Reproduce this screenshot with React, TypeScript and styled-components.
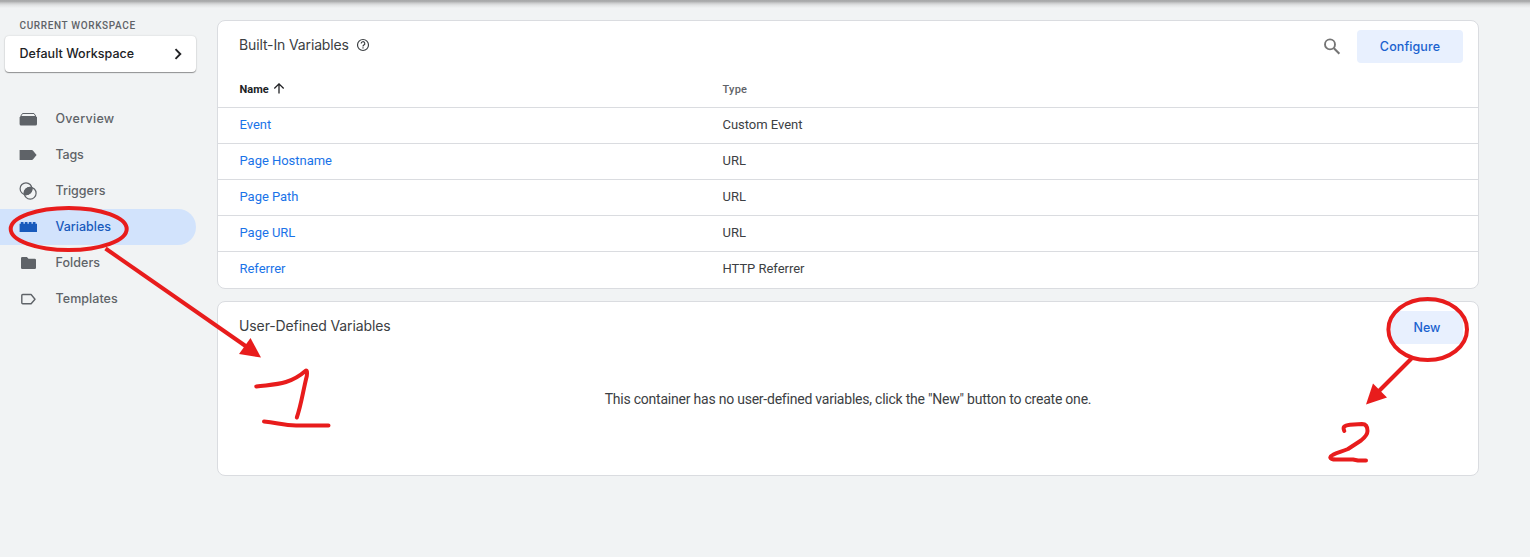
import React from 'react';
import styled, { createGlobalStyle } from 'styled-components';

const GlobalStyle = createGlobalStyle`
  * { box-sizing: border-box; }
  body { margin: 0; background: #f1f3f4; font-family: Roboto, "Liberation Sans", sans-serif; color: #3c4043; overflow: hidden; }
`;

const Page = styled.div`
  position: relative;
  display: flex;
  height: 557px;
  width: 100%;
  background: #f1f3f4;
`;

const TopShadow = styled.div`
  position: absolute;
  inset: 0 0 auto 0;
  height: 8px;
  background: linear-gradient(#a6a7a8 0, #adaeaf 1.5px, #c9cacb 3px, #e0e2e3 5px, #f1f3f4 8px);
`;

const Sidebar = styled.aside`
  width: 217px;
  flex: none;
  padding-top: 19px;
`;

const WorkspaceLabel = styled.div`
  padding-left: 19.5px;
  font-size: 10px;
  line-height: 14px;
  font-weight: 500;
  letter-spacing: 0.64px;
  color: #5f6368;
`;

const WorkspaceButton = styled.button`
  display: flex;
  align-items: center;
  justify-content: space-between;
  width: 191px;
  height: 36px;
  margin: 3px 0 0 5px;
  padding: 0 12px 0 14.5px;
  border: 0;
  border-radius: 4px;
  background: #fff;
  box-shadow: 0 1px 1px rgba(0, 0, 0, 0.38), 0 0 2px rgba(0, 0, 0, 0.16);
`;

const Label = styled.span<{ $size?: number; $weight?: number; $track?: number; $color?: string }>`
  font-family: Inter, Roboto, sans-serif;
  font-size: ${p => p.$size ?? 12.5}px;
  font-weight: ${p => p.$weight ?? 500};
  letter-spacing: ${p => p.$track ?? 0}px;
  color: ${p => p.$color ?? 'inherit'};
  line-height: 20px;
  white-space: nowrap;
`;

const Nav = styled.nav`
  margin-top: 29px;
`;

const NavItem = styled.a<{ $active?: boolean }>`
  display: flex;
  align-items: center;
  gap: 17.5px;
  width: 196px;
  height: 36px;
  padding-left: 19px;
  border-radius: 0 18px 18px 0;
  background: ${p => (p.$active ? '#d2e3fc' : 'transparent')};
  color: ${p => (p.$active ? '#185abc' : '#5f6368')};
  svg { flex: none; }
`;

const Main = styled.main`
  flex: 1;
  display: flex;
  flex-direction: column;
  gap: 12px;
  padding: 20px 51px 0 0;
`;

const Card = styled.section<{ $height: number }>`
  height: ${p => p.$height}px;
  border: 1px solid #dadce0;
  border-radius: 8px;
  background: #fff;
  overflow: hidden;
`;

const CardHeader = styled.header`
  display: flex;
  align-items: center;
  height: 50px;
  padding: 0 15px 0 21px;
  svg { flex: none; }
`;

const Title = styled.div`
  flex: 1;
  display: flex;
  align-items: center;
  gap: 7px;
  padding-bottom: 2px;
`;

const Button = styled.button<{ $width: number }>`
  width: ${p => p.$width}px;
  height: 33px;
  margin-left: 16px;
  padding: 2px 0 0;
  border: 0;
  border-radius: 4px;
  background: #e8f0fe;
  color: #1a62cf;
`;

const Row = styled.div<{ $head?: boolean }>`
  display: grid;
  grid-template-columns: 483px 1fr;
  align-items: center;
  height: ${p => (p.$head ? 37 : 36)}px;
  padding: ${p => (p.$head ? '0 21.5px' : '0 21.5px 2px')};
  border-bottom: 1px solid #dadce0;
  font-size: ${p => (p.$head ? 11 : 13)}px;
  font-weight: ${p => (p.$head ? 500 : 400)};
  letter-spacing: ${p => (p.$head ? 0.25 : -0.03)}px;
  color: ${p => (p.$head ? '#5f6368' : '#3c4043')};
  &:last-child { border-bottom-color: transparent; }
`;

const SortCell = styled.span`
  display: flex;
  align-items: center;
  gap: 4.5px;
  font-weight: 700;
  letter-spacing: 0;
  color: #202124;
`;

const VariableLink = styled.a`
  color: #1a73e8;
`;

const Empty = styled.p`
  margin: 37px 0 0;
  text-align: center;
  font-size: 14px;
  line-height: 20px;
  letter-spacing: -0.225px;
`;

const Annotations = styled.svg`
  position: absolute;
  left: 0;
  top: 0;
  pointer-events: none;
`;

const icons = {
  Overview: (
    <svg width="19" height="18" viewBox="0 0 19 18">
      <path d="M3.500 3.500h11.500l2 3H1.500z" fill="none" stroke="currentColor" />
      <path d="M.6 7h17.400v7a1.500 1.500 0 0 1-1.500 1.500H2.100A1.500 1.500 0 0 1 .6 14z" fill="currentColor" />
    </svg>
  ),
  Tags: (
    <svg width="19" height="18" viewBox="0 0 19 18">
      <path d="M.6 4h12.200a1.600 1.600 0 0 1 1.300.7L17.600 9l-3.500 4.300a1.600 1.600 0 0 1-1.300.7H.6z" fill="currentColor" />
    </svg>
  ),
  Triggers: (
    <svg width="19" height="18" viewBox="0 0 19 18">
      <circle cx="7" cy="6.700" r="5.900" fill="none" stroke="currentColor" strokeWidth="1.200" />
      <circle cx="11.200" cy="11.200" r="5.900" fill="none" stroke="currentColor" strokeWidth="1.200" />
      <path d="M12.900 5.500A6.100 6.100 0 0 1 5.300 12.400 6.100 6.100 0 0 1 12.900 5.500z" fill="currentColor" stroke="currentColor" strokeWidth="1.100" />
    </svg>
  ),
  Variables: (
    <svg width="19" height="18" viewBox="0 0 19 18">
      <path d="M.6 14V5.700H1.800V4h2.700v1.700h1.300V4h2.700v1.700h1.300V4h2.700v1.700h1.300V4h2.700v1.700H18V14z" fill="currentColor" />
    </svg>
  ),
  Folders: (
    <svg width="19" height="18" viewBox="0 0 19 18">
      <path d="M3.300 3h4.600l1.600 1.700h6.200A1.300 1.300 0 0 1 17 6v7.700a1.300 1.300 0 0 1-1.300 1.300H3.300A1.300 1.300 0 0 1 2 13.700V4.300A1.300 1.300 0 0 1 3.300 3z" fill="currentColor" />
    </svg>
  ),
  Templates: (
    <svg width="19" height="18" viewBox="0 0 19 18">
      <path d="M3.700 4.500h8.400L16 9.200l-3.900 4.500H3.700a.9.900 0 0 1-.9-.9V5.400a.9.900 0 0 1 .9-.9z" fill="none" stroke="currentColor" strokeWidth="1.400" strokeLinejoin="round" />
    </svg>
  ),
};

const navItems: { name: keyof typeof icons; track: number }[] = [
  { name: 'Overview', track: 0.28 },
  { name: 'Tags', track: -0.2 },
  { name: 'Triggers', track: 0 },
  { name: 'Variables', track: 0 },
  { name: 'Folders', track: 0.05 },
  { name: 'Templates', track: 0.05 },
];

const variables = [
  ['Event', 'Custom Event'],
  ['Page Hostname', 'URL'],
  ['Page Path', 'URL'],
  ['Page URL', 'URL'],
  ['Referrer', 'HTTP Referrer'],
];

export default function App() {
  return (
    <Page>
      <GlobalStyle />
      <TopShadow />
      <Sidebar>
        <WorkspaceLabel>CURRENT WORKSPACE</WorkspaceLabel>
        <WorkspaceButton>
          <Label $color="#202124" $track={0.03}>Default Workspace</Label>
          <svg width="12" height="14" viewBox="0 0 12 14">
            <path d="M3.500 2.200 8.300 7l-4.800 4.800" fill="none" stroke="#202124" strokeWidth="1.900" />
          </svg>
        </WorkspaceButton>
        <Nav>
          {navItems.map(({ name, track }) => (
            <NavItem key={name} $active={name === 'Variables'}>
              {icons[name]}
              <Label $track={track}>{name}</Label>
            </NavItem>
          ))}
        </Nav>
      </Sidebar>
      <Main>
        <Card $height={269}>
          <CardHeader>
            <Title>
              <Label $size={14} $weight={400} $track={-0.13}>Built-In Variables</Label>
              <svg width="14" height="14" viewBox="0 0 14 14" fill="none" stroke="#3c4043" strokeWidth="1.200">
                <circle cx="7" cy="7" r="5.500" />
                <path d="M5.200 5.600a1.800 1.800 0 1 1 2.700 1.500c-.6.400-.9.700-.9 1.400M7 9.300v1.200" />
              </svg>
            </Title>
            <svg width="18" height="18" viewBox="0 0 18 18" fill="none" stroke="#757575">
              <circle cx="7" cy="7.400" r="5" strokeWidth="1.900" />
              <path d="m10.900 11.300 5.500 5.500" strokeWidth="2.100" />
            </svg>
            <Button $width={106}><Label $track={0.1}>Configure</Label></Button>
          </CardHeader>
          <Row $head>
            <SortCell>
              Name
              <svg width="12" height="12" viewBox="0 0 12 12" fill="none" stroke="#202124" strokeWidth="1.300">
                <path d="M6 10.500V1M1.300 5.500 6 .9l4.700 4.600" />
              </svg>
            </SortCell>
            <span>Type</span>
          </Row>
          {variables.map(([name, type]) => (
            <Row key={name}>
              <VariableLink>{name}</VariableLink>
              <span>{type}</span>
            </Row>
          ))}
        </Card>
        <Card $height={175}>
          <CardHeader>
            <Title><Label $size={14} $weight={400} $track={-0.11}>User-Defined Variables</Label></Title>
            <Button $width={72}><Label>New</Label></Button>
          </CardHeader>
          <Empty>This container has no user-defined variables, click the "New" button to create one.</Empty>
        </Card>
      </Main>
      <Annotations width="1530" height="557" viewBox="0 0 1530 557" fill="none" stroke="#e81c1c" strokeWidth="4" strokeLinecap="round" strokeLinejoin="round">
        <ellipse cx="68.700" cy="229" rx="58" ry="21" />
        <path d="M105.500 248.500 247 347" strokeLinecap="butt" />
        <path d="M250.500 338 261 357.500 239 354z" fill="#e81c1c" stroke="none" />
        <path d="M256.300 386.500C274 384 289 385.500 306 370.500Q307.500 370.500 306.800 376C303 391 301 406 296.800 417.500" />
        <path d="M264 421.500C278 423 284 425.500 296 425.500H328.500" />
        <ellipse cx="1427.700" cy="329.500" rx="39.300" ry="30.500" />
        <path d="M1411.500 358.500 1379 391" strokeLinecap="butt" />
        <path d="M1373 383.500 1387 397.500 1366 404.500z" fill="#e81c1c" stroke="none" />
        <path d="M1344.300 431C1342.500 427 1344 425.500 1350 424.800L1362 424Q1367.500 424 1367.500 431C1367.500 434.500 1366 436.500 1361 440.500L1348 449C1340 452.500 1331 454 1330.300 457.500Q1331 459.500 1336 459.500H1353L1358 460.500H1366" />
      </Annotations>
    </Page>
  );
}
